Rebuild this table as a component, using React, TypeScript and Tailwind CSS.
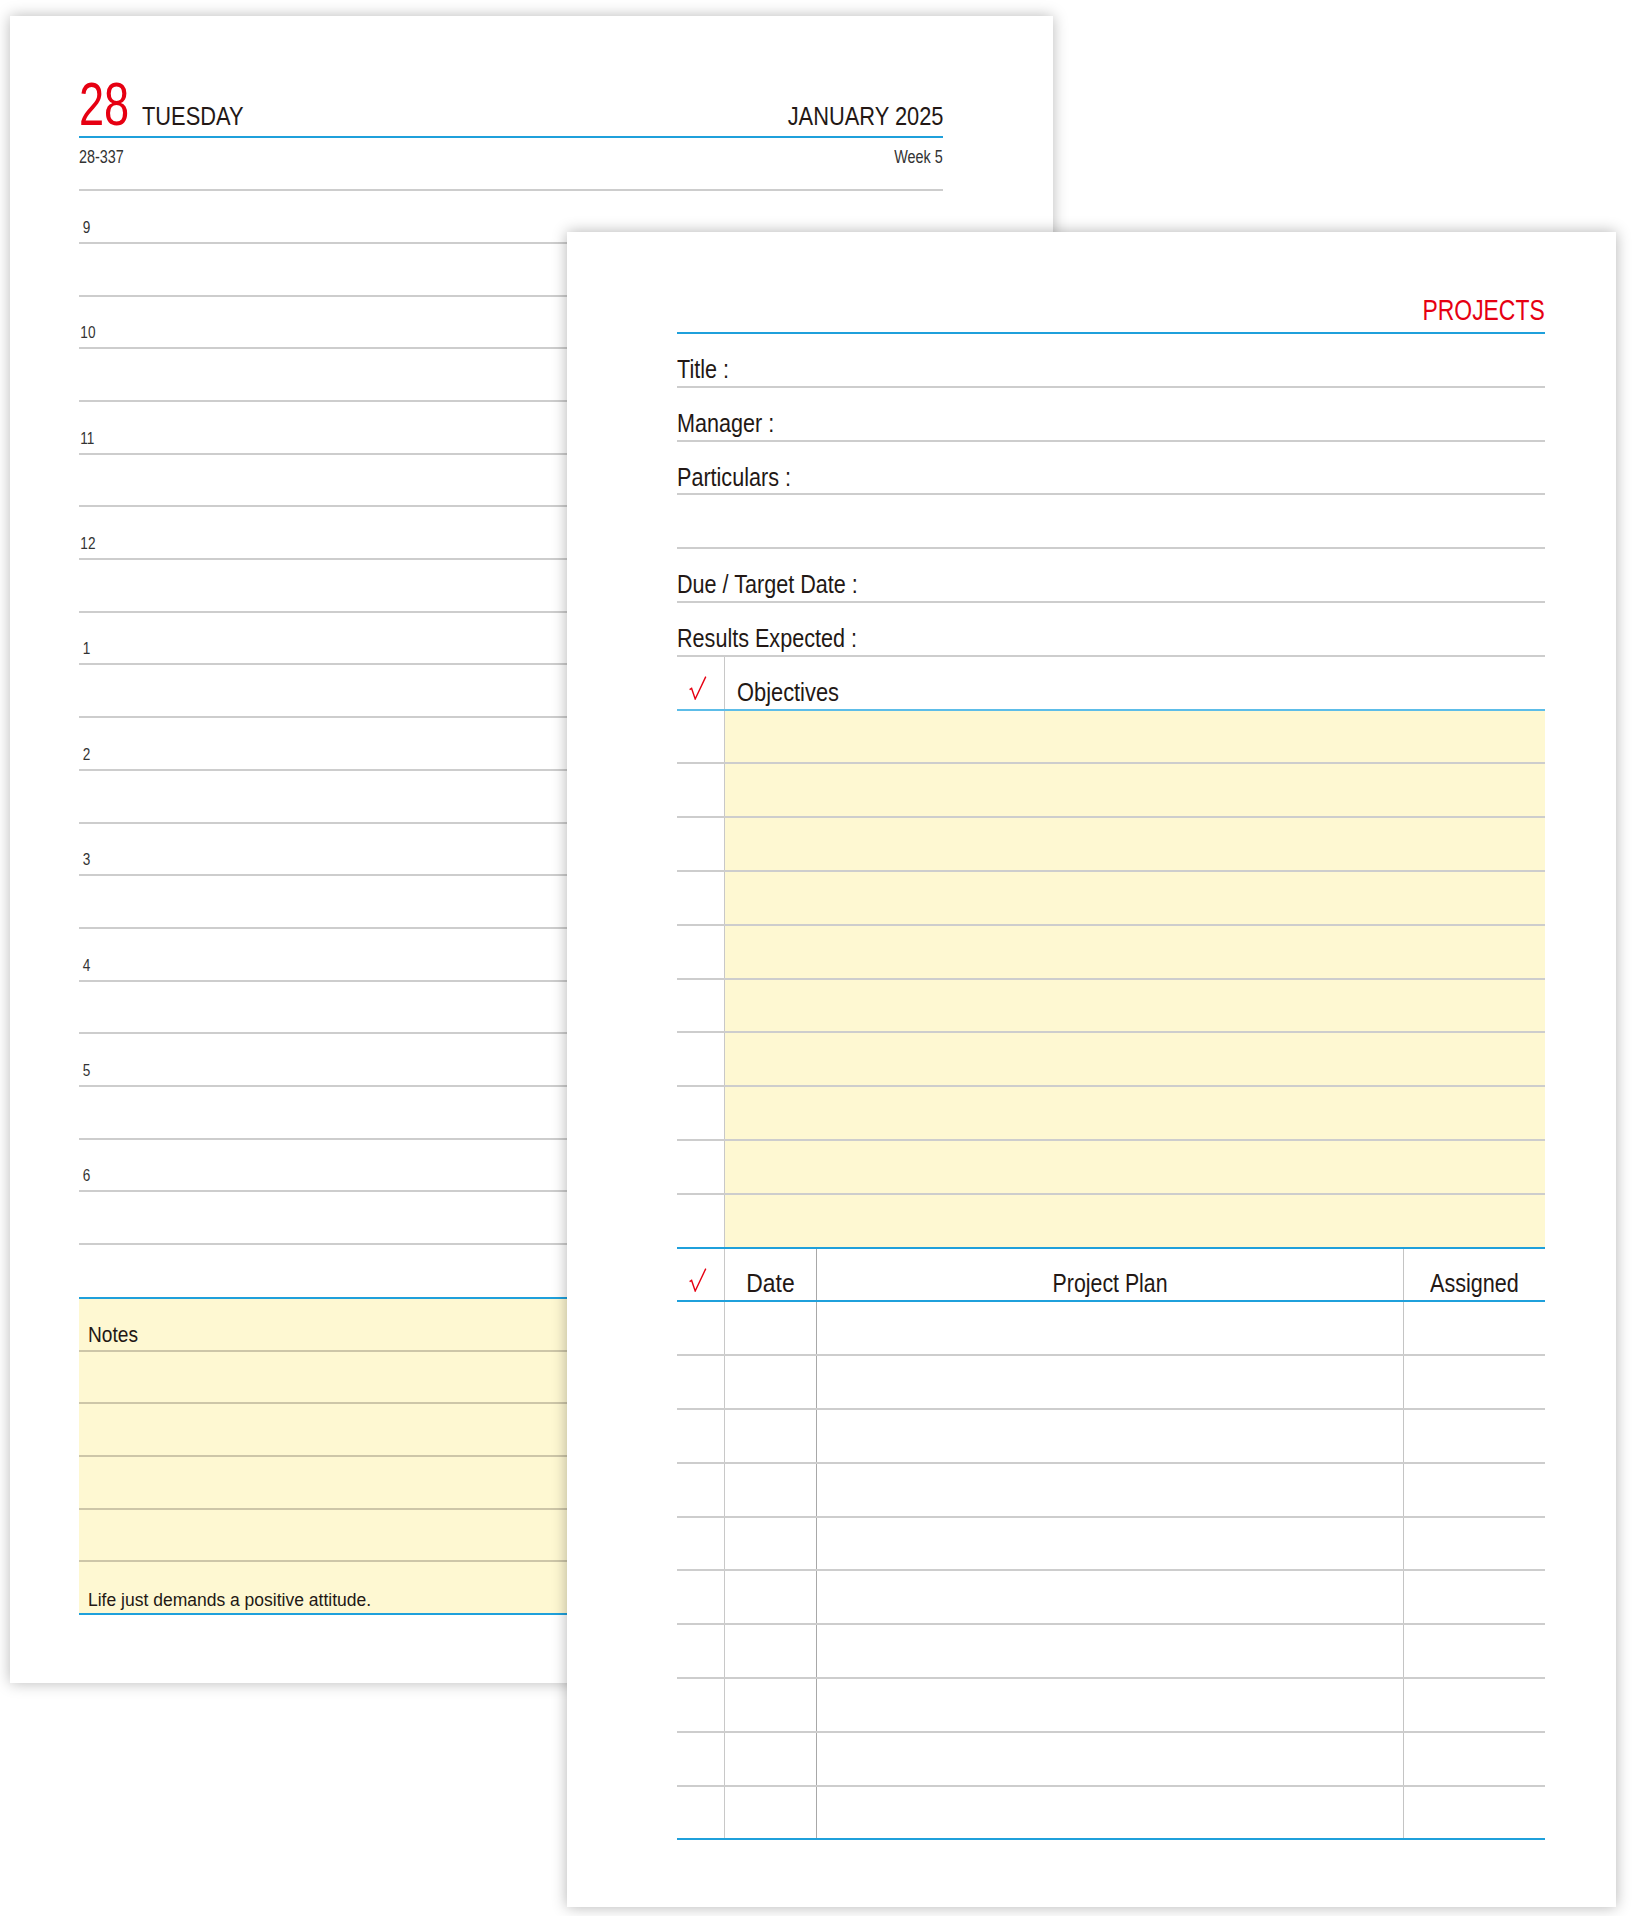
import React from "react";

const FONT = "font-['Liberation_Sans',Arial,sans-serif]";

function Check() {
  return (
    <svg width="18" height="24" viewBox="0 0 18 24" className="block">
      <path
        d="M0.6 13.6 L2.6 12.4 L6.2 23 L16.8 0.6"
        fill="none"
        stroke="#e60012"
        strokeWidth="1.4"
        strokeLinejoin="miter"
      />
    </svg>
  );
}

function LeftPage() {
  const hours = ["9", "10", "11", "12", "1", "2", "3", "4", "5", "6"];
  const rows: (string | null)[] = [];
  hours.forEach((h) => {
    rows.push(h);
    rows.push(null);
  });
  return (
    <div className={`w-[1043px] h-[1667px] bg-white shadow-[0_0_14px_rgba(0,0,0,0.28)] pl-[69px] pr-[110px] text-[#231815] ${FONT}`}>
      <div className="h-[120px] flex items-end">
        <div className="flex items-baseline w-full pb-[1px]">
          <span className="w-[63px] shrink-0">
            <span className="inline-block origin-left scale-x-[0.74] text-[61px] leading-none text-[#e60012]">28</span>
          </span>
          <span className="inline-block origin-left scale-x-[0.84] text-[26px] leading-none">TUESDAY</span>
          <span className="inline-block origin-right scale-x-[0.84] text-[26px] leading-none ml-auto">JANUARY 2025</span>
        </div>
      </div>
      <div className="border-t-2 border-[#1fa0db]" />
      <div className="h-[53.3px] border-b-2 border-[#cdcdcd] flex items-start justify-between pt-[10px] text-[18px] leading-none text-[#333]">
        <span className="inline-block origin-left scale-x-[0.8]">28-337</span>
        <span className="inline-block origin-right scale-x-[0.8]">Week 5</span>
      </div>
      {rows.map((r, i) => (
        <div key={i} className="h-[52.7px] border-b-2 border-[#cdcdcd] flex items-end pb-[6px]">
          {r && (
            <span className="w-[15px] text-center text-[16px] leading-none text-[#333]">
              <span className="inline-block origin-center scale-x-[0.85]">{r}</span>
            </span>
          )}
        </div>
      ))}
      <div className="h-[52px]" />
      <div className="border-t-2 border-[#1fa0db] bg-[#fef8d2]">
        <div className="h-[52.7px] border-b-2 border-[#cdc6a8] flex items-end pb-[3.5px] pl-[9px]">
          <span className="inline-block origin-left scale-x-[0.87] text-[22px] leading-none">Notes</span>
        </div>
        {[0, 1, 2, 3].map((i) => (
          <div key={i} className="h-[52.7px] border-b-2 border-[#cdc6a8]" />
        ))}
        <div className="h-[52.7px] border-b-2 border-[#1fa0db] flex items-end pb-[4px] pl-[9px]">
          <span className="text-[17.5px] leading-none">Life just demands a positive attitude.</span>
        </div>
      </div>
    </div>
  );
}

function LabelRow({ label }: { label: string }) {
  return (
    <div className="h-[53.8px] border-b-2 border-[#cdcdcd] flex items-end pb-[3.5px]">
      <span className="inline-block origin-left scale-x-[0.83] text-[26px] leading-none whitespace-nowrap">{label}</span>
    </div>
  );
}

function RightPage() {
  const labels = ["Title :", "Manager :", "Particulars :", "", "Due / Target Date :", "Results Expected :"];
  const ten = [0, 1, 2, 3, 4, 5, 6, 7, 8, 9];
  return (
    <div className={`absolute left-[567px] top-[232px] w-[1049px] h-[1675px] bg-white shadow-[0_0_14px_rgba(0,0,0,0.3)] pl-[110px] pr-[71px] text-[#231815] ${FONT}`}>
      <div className="h-[100px] flex items-end justify-end pb-[7.5px]">
        <span className="inline-block origin-right scale-x-[0.79] text-[29px] leading-none text-[#e60012]">PROJECTS</span>
      </div>
      <div className="border-t-2 border-[#1fa0db]" />
      {labels.map((l, i) => (
        <LabelRow key={i} label={l} />
      ))}
      <div className="h-[53.8px] border-b-2 border-[#5dbde8] flex">
        <div className="w-[48px] border-r border-[#c8c8c8] flex items-end pb-[8.5px] pl-[12px]">
          <Check />
        </div>
        <div className="flex-1 flex items-end pb-[4px] pl-[12px]">
          <span className="inline-block origin-left scale-x-[0.84] text-[26px] leading-none">Objectives</span>
        </div>
      </div>
      {ten.map((i) => (
        <div
          key={i}
          className={`h-[53.8px] border-b-2 flex ${i === 9 ? "border-[#1fa0db]" : "border-[#cdcdcd]"}`}
        >
          <div className="w-[48px] border-r border-[#c8c8c8]" />
          <div className="flex-1 bg-[#fef8d2]" />
        </div>
      ))}
      <div className="h-[53.8px] border-b-2 border-[#1fa0db] flex">
        <div className="w-[48px] border-r border-[#c8c8c8] flex items-end pb-[8px] pl-[12px]">
          <Check />
        </div>
        <div className="w-[92px] border-r border-[#a8a8a8] flex items-end justify-center pb-[4px]">
          <span className="inline-block origin-center scale-x-[0.88] text-[26px] leading-none">Date</span>
        </div>
        <div className="flex-1 border-r border-[#c4c4c4] flex items-end justify-center pb-[4px]">
          <span className="inline-block origin-center scale-x-[0.82] text-[26px] leading-none">Project Plan</span>
        </div>
        <div className="w-[141px] flex items-end justify-center pb-[4px]">
          <span className="inline-block origin-center scale-x-[0.83] text-[26px] leading-none">Assigned</span>
        </div>
      </div>
      {ten.map((i) => (
        <div
          key={i}
          className={`h-[53.8px] border-b-2 flex ${i === 9 ? "border-[#1fa0db]" : "border-[#cdcdcd]"}`}
        >
          <div className="w-[48px] border-r border-[#c8c8c8]" />
          <div className="w-[92px] border-r border-[#a8a8a8]" />
          <div className="flex-1 border-r border-[#c4c4c4]" />
          <div className="w-[141px]" />
        </div>
      ))}
    </div>
  );
}

export default function App() {
  return (
    <div className="relative w-[1633px] h-[1916px] bg-white overflow-hidden pt-[16px] pl-[10px]">
      <LeftPage />
      <RightPage />
    </div>
  );
}
